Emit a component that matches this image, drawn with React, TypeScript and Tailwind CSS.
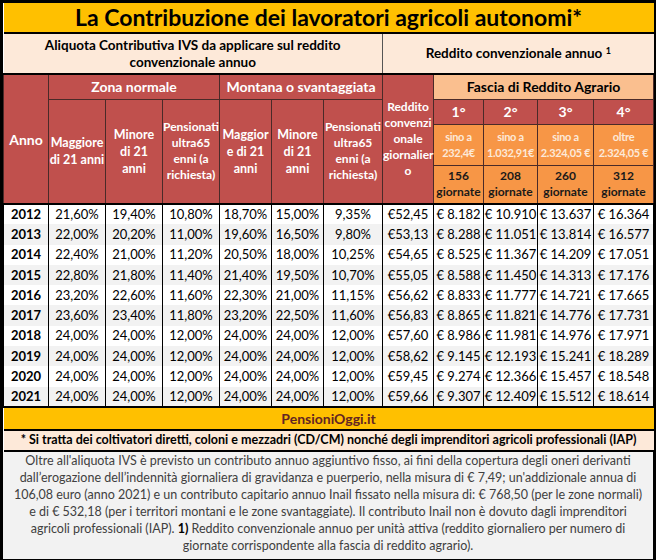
import React from 'react';

const ROWS = [
  ['2012', '21,60%', '19,40%', '10,80%', '18,70%', '15,00%', '9,35%', '€52,45', '€ 8.182', '€ 10.910', '€ 13.637', '€ 16.364'],
  ['2013', '22,00%', '20,20%', '11,00%', '19,60%', '16,50%', '9,80%', '€53,13', '€ 8.288', '€ 11.051', '€ 13.814', '€ 16.577'],
  ['2014', '22,40%', '21,00%', '11,20%', '20,50%', '18,00%', '10,25%', '€54,65', '€ 8.525', '€ 11.367', '€ 14.209', '€ 17.051'],
  ['2015', '22,80%', '21,80%', '11,40%', '21,40%', '19,50%', '10,70%', '€55,05', '€ 8.588', '€ 11.450', '€ 14.313', '€ 17.176'],
  ['2016', '23,20%', '22,60%', '11,60%', '22,30%', '21,00%', '11,15%', '€56,62', '€ 8.833', '€ 11.777', '€ 14.721', '€ 17.665'],
  ['2017', '23,60%', '23,40%', '11,80%', '23,20%', '22,50%', '11,60%', '€56,83', '€ 8.865', '€ 11.821', '€ 14.776', '€ 17.731'],
  ['2018', '24,00%', '24,00%', '12,00%', '24,00%', '24,00%', '12,00%', '€57,60', '€ 8.986', '€ 11.981', '€ 14.976', '€ 17.971'],
  ['2019', '24,00%', '24,00%', '12,00%', '24,00%', '24,00%', '12,00%', '€58,62', '€ 9.145', '€ 12.193', '€ 15.241', '€ 18.289'],
  ['2020', '24,00%', '24,00%', '12,00%', '24,00%', '24,00%', '12,00%', '€59,45', '€ 9.274', '€ 12.366', '€ 15.457', '€ 18.548'],
  ['2021', '24,00%', '24,00%', '12,00%', '24,00%', '24,00%', '12,00%', '€59,66', '€ 9.307', '€ 12.409', '€ 15.512', '€ 18.614'],
];

const COLS = [45, 57, 57, 57, 52, 52, 59, 51, 50, 54, 56, 60];

const FASCE = [
  { n: '1°', range: ['sino a', '232,4€'], days: '156' },
  { n: '2°', range: ['sino a', '1.032,91€'], days: '208' },
  { n: '3°', range: ['sino a', '2.324,05 €'], days: '260' },
  { n: '4°', range: ['oltre', '2.324,05 €'], days: '312' },
];

// header cells on the red background
const red = 'bg-[#C0504D] text-white font-bold border border-[#4a2a28] text-center align-middle';
const orange = 'bg-[#F79646] font-bold border border-[#4a2a28] text-center align-middle';

export default function App() {
  return (
    <div className="w-[659px] h-[560px] bg-white font-['Lato',sans-serif] text-black">
      <div className="w-[656px] border-[3px] border-black">
        <table className="w-[650px] table-fixed border-collapse">
          <colgroup>
            {COLS.map((w, i) => (
              <col key={i} style={{ width: w }} />
            ))}
          </colgroup>
          <tbody>
            {/* title */}
            <tr className="h-[30px]">
              <td colSpan={12} className="bg-[#FFC000] text-center text-[23px] font-bold leading-none border-b-2 border-black">
                La Contribuzione dei lavoratori agricoli autonomi*
              </td>
            </tr>

            {/* sections */}
            <tr className="h-[41px]">
              <td colSpan={7} className="bg-[#FDE9D9] text-center text-[13.5px] font-bold leading-[17px] border-r border-[#555] border-b-2 border-b-black">
                Aliquota Contributiva IVS da applicare sul reddito
                <br />
                convenzionale annuo
              </td>
              <td colSpan={5} className="bg-[#FDE9D9] text-center text-[13.5px] font-bold border-b-2 border-black">
                Reddito convenzionale annuo <sup className="text-[9px]">1</sup>
              </td>
            </tr>

            <tr className="h-[25px]">
              <td rowSpan={4} className={`${red} text-[14px]`}>Anno</td>
              <td colSpan={3} className={`${red} text-[14px]`}>Zona normale</td>
              <td colSpan={3} className={`${red} text-[14px]`}>Montana o svantaggiata</td>
              <td rowSpan={4} className={`${red} text-[12px] leading-[16px] text-[#F8E1E0]`}>
                Reddito
                <br />
                convenzi
                <br />
                onale
                <br />
                giornalier
                <br />o
              </td>
              <td colSpan={4} className="bg-[#FABF8F] text-center text-[14px] font-bold border border-[#4a2a28]">
                Fascia di Reddito Agrario
              </td>
            </tr>

            <tr className="h-[25px]">
              <td rowSpan={3} className={`${red} text-[12.5px] leading-[17px]`}>
                Maggiore
                <br />
                di 21 anni
              </td>
              <td rowSpan={3} className={`${red} text-[12.5px] leading-[17px]`}>
                Minore
                <br />
                di 21
                <br />
                anni
              </td>
              <td rowSpan={3} className={`${red} text-[12px] leading-[16px]`}>
                Pensionati
                <br />
                ultra65
                <br />
                enni (a
                <br />
                richiesta)
              </td>
              <td rowSpan={3} className={`${red} text-[12.5px] leading-[17px]`}>
                Maggior
                <br />
                e di 21
                <br />
                anni
              </td>
              <td rowSpan={3} className={`${red} text-[12.5px] leading-[17px]`}>
                Minore
                <br />
                di 21
                <br />
                anni
              </td>
              <td rowSpan={3} className={`${red} text-[12px] leading-[16px]`}>
                Pensionati
                <br />
                ultra65
                <br />
                enni (a
                <br />
                richiesta)
              </td>
              {FASCE.map((f) => (
                <td key={f.n} className={`${red} text-[14px]`}>
                  {f.n}
                </td>
              ))}
            </tr>

            <tr className="h-[41px]">
              {FASCE.map((f) => (
                <td key={f.n} className={`${orange} text-[11px] leading-[16px] tracking-[-0.3px] text-[#FDE9D9]`}>
                  {f.range[0]}
                  <br />
                  {f.range[1]}
                </td>
              ))}
            </tr>

            <tr className="h-[39px] border-b-2 border-black">
              {FASCE.map((f) => (
                <td key={f.n} className={`${orange} text-[12px] leading-[16px] text-[#1a1a1a] border-b-2 border-b-black`}>
                  {f.days}
                  <br />
                  giornate
                </td>
              ))}
            </tr>

            {/* data */}
            {ROWS.map((r, i) => (
              <tr key={r[0]} className={`h-[20.3px] ${i % 2 ? 'bg-[#F2F2F2]' : 'bg-white'}`}>
                {r.map((v, j) => (
                  <td
                    key={j}
                    className={`text-center text-[13px] leading-none border-x border-black ${j === 0 ? 'font-bold' : ''}`}
                  >
                    {v}
                  </td>
                ))}
              </tr>
            ))}

            <tr className="h-[19px]">
              <td colSpan={12} className="bg-[#FFC000] text-center text-[14px] font-bold text-[#632523] border-y-2 border-black">
                PensioniOggi.it
              </td>
            </tr>
            <tr className="h-[21px]">
              <td colSpan={12} className="bg-[#FDE9D9] text-center text-[12.5px] font-bold border-b-2 border-black">
                * Si tratta dei coltivatori diretti, coloni e mezzadri (CD/CM) nonché degli imprenditori agricoli professionali (IAP)
              </td>
            </tr>
          </tbody>
        </table>

        <div className="bg-[#F2F2F2] h-[107px] pt-0 text-center text-[12.5px] leading-[17px] text-[#404040]">
          Oltre all'aliquota IVS è previsto un contributo annuo aggiuntivo fisso, ai fini della copertura degli oneri derivanti
          <br />
          dall’erogazione dell’indennità giornaliera di gravidanza e puerperio, nella misura di € 7,49; un'addizionale annua di
          <br />
          106,08 euro (anno 2021) e un contributo capitario annuo Inail fissato nella misura di: € 768,50 (per le zone normali)
          <br />
          e di € 532,18 (per i territori montani e le zone svantaggiate). Il contributo Inail non è dovuto dagli imprenditori
          <br />
          agricoli professionali (IAP). <span className="font-bold text-black">1)</span> Reddito convenzionale annuo per unità attiva (reddito giornaliero per numero di
          <br />
          giornate corrispondente alla fascia di reddito agrario).
        </div>
      </div>
    </div>
  );
}
